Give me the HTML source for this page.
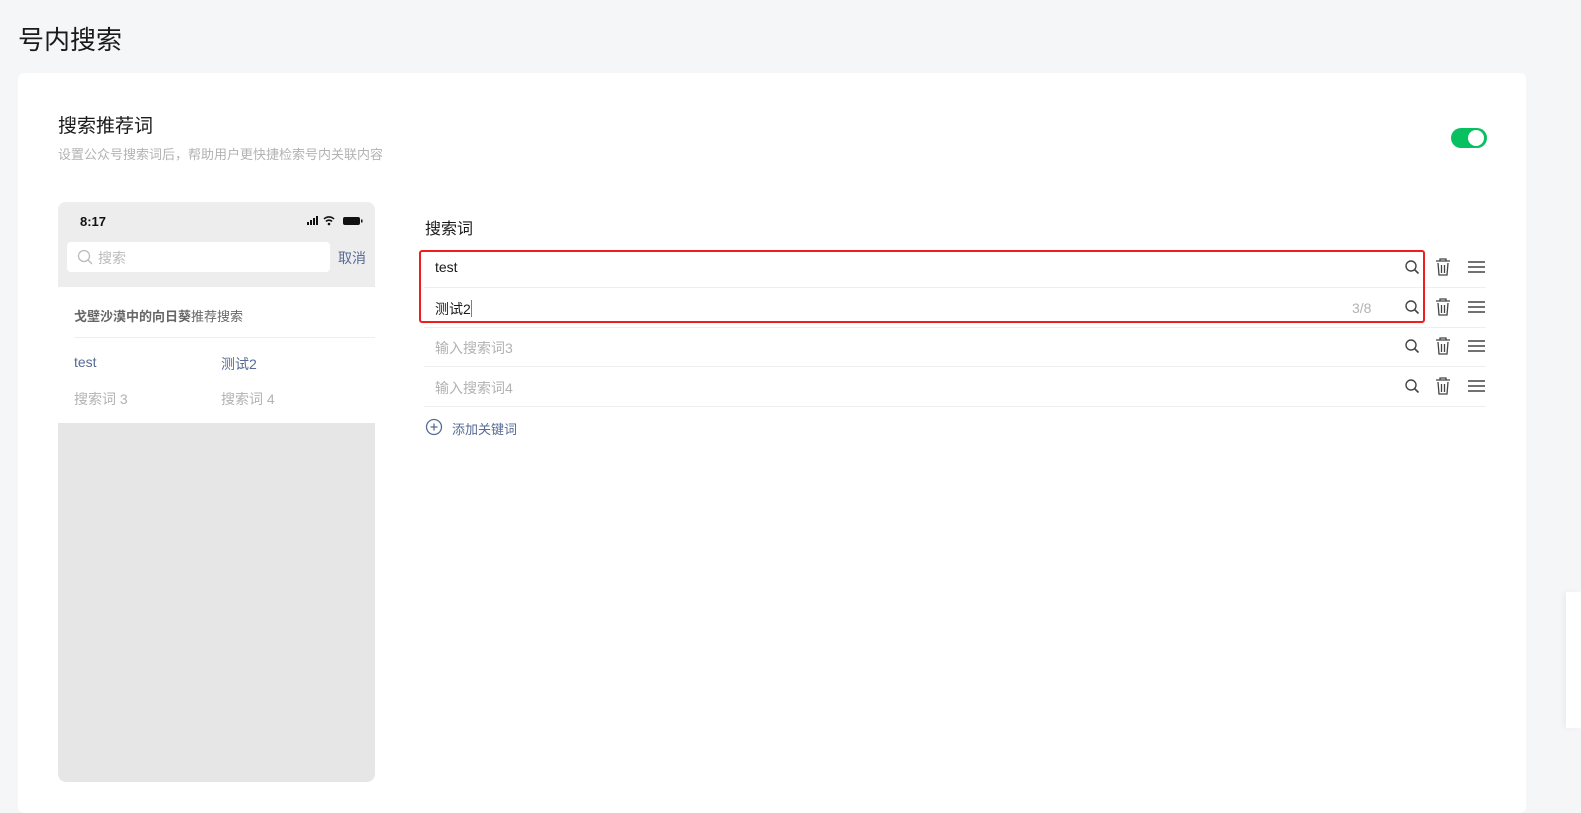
<!DOCTYPE html>
<html><head><meta charset="utf-8"><style>
*{margin:0;padding:0;box-sizing:border-box}
body{width:1581px;height:798px;background:#f5f6f8;font-family:"Liberation Sans","Noto Sans CJK SC",sans-serif;position:relative;overflow:hidden;color:#222}
.a{position:absolute}
</style></head><body>
<div class="a" style="left:18px;top:20px;font-size:26px;color:#1a1a1a">号内搜索</div>
<div class="a" style="left:18px;top:73px;width:1508px;height:740px;background:#fff;border-radius:6px"></div>
<div class="a" style="left:1566px;top:592px;width:15px;height:136px;background:#fff;box-shadow:-3px 0 6px rgba(0,0,0,.04)"></div>
<div class="a" style="left:58px;top:111px;font-size:19px;color:#1a1a1a">搜索推荐词</div>
<div class="a" style="left:58px;top:144px;font-size:13px;color:#b2b2b2">设置公众号搜索词后，帮助用户更快捷检索号内关联内容</div>
<div class="a" style="left:1451px;top:128px;width:36px;height:20px;border-radius:10px;background:#07c160"></div>
<div class="a" style="left:1468px;top:130px;width:16px;height:16px;border-radius:50%;background:#fff"></div>

<div class="a" style="left:58px;top:202px;width:317px;height:580px;background:#e6e6e6;border-radius:8px;overflow:hidden">
 <div class="a" style="left:0;top:0;width:317px;height:85px;background:#ededed"></div>
 <div class="a" style="left:22px;top:12px;font-size:13px;font-weight:bold;color:#111">8:17</div>
 <svg class="a" style="left:248px;top:13px" width="60" height="12"><rect x="1" y="7" width="2" height="3" fill="#111"/><rect x="4" y="5" width="2" height="5" fill="#111"/><rect x="7" y="3" width="2" height="7" fill="#111"/><rect x="10" y="1" width="2" height="9" fill="#111"/><path d="M18 4a7 7 0 0 1 10 0M20 6.5a4 4 0 0 1 6 0" stroke="#111" stroke-width="1.6" fill="none"/><circle cx="23" cy="9" r="1.3" fill="#111"/><rect x="37" y="2" width="17" height="8" rx="2" fill="#111"/><rect x="55" y="4.5" width="1.5" height="3" fill="#111"/></svg>
 <div class="a" style="left:9px;top:40px;width:263px;height:30px;background:#fff;border-radius:4px"></div>
 <svg class="a" style="left:19px;top:47px" width="16" height="16"><circle cx="7" cy="7" r="5.5" stroke="#bbb" stroke-width="1.3" fill="none"/><path d="M11 11l4 4" stroke="#bbb" stroke-width="1.3"/></svg>
 <div class="a" style="left:40px;top:46px;font-size:14px;color:#bbb">搜索</div>
 <div class="a" style="left:280px;top:46px;font-size:14px;color:#576b95">取消</div>
 <div class="a" style="left:0;top:85px;width:317px;height:136px;background:#fff"></div>
 <div class="a" style="left:16px;top:104px;font-size:13px;font-weight:bold;color:#666">戈壁沙漠中的向日葵<span style="font-weight:normal">推荐搜索</span></div>
 <div class="a" style="left:16px;top:135px;width:301px;height:1px;background:#eee"></div>
 <div class="a" style="left:16px;top:152px;font-size:14px;color:#576b95">test</div>
 <div class="a" style="left:163px;top:152px;font-size:14px;color:#576b95">测试2</div>
 <div class="a" style="left:16px;top:187px;font-size:14px;color:#b2b2b2">搜索词 3</div>
 <div class="a" style="left:163px;top:187px;font-size:14px;color:#b2b2b2">搜索词 4</div>
</div>

<div class="a" style="left:425px;top:215px;font-size:16px;color:#1a1a1a">搜索词</div>
<div class="a" style="left:424px;top:287px;width:1062px;height:1px;background:#eee"></div>
<div class="a" style="left:424px;top:327px;width:1062px;height:1px;background:#eee"></div>
<div class="a" style="left:424px;top:366px;width:1062px;height:1px;background:#eee"></div>
<div class="a" style="left:424px;top:406px;width:1062px;height:1px;background:#eee"></div>
<div class="a" style="left:419px;top:250px;width:1006px;height:73px;border:2px solid #f21c1c;border-radius:3px"></div>
<div class="a" style="left:435px;top:259px;font-size:14px;color:#1a1a1a">test</div>
<div class="a" style="left:435px;top:299px;font-size:14px;color:#1a1a1a">测试2<span style="display:inline-block;width:1px;height:17px;background:#07c160;vertical-align:-3px"></span></div>
<div class="a" style="left:1352px;top:300px;font-size:14px;color:#b2b2b2">3/8</div>
<div class="a" style="left:435px;top:338px;font-size:14px;color:#b2b2b2">输入搜索词3</div>
<div class="a" style="left:435px;top:378px;font-size:14px;color:#b2b2b2">输入搜索词4</div>

<svg class="a" style="left:1400px;top:255px" width="90" height="145">
 <defs><g id="r">
  <circle cx="11" cy="11" r="5" stroke="#444" stroke-width="1.4" fill="none"/><path d="M14.5 14.5l4 4" stroke="#444" stroke-width="1.6"/>
  <path d="M36 6h14M40 6V4h6v2M38 8l1 12h8l1-12M41.5 10v8M44.5 10v8" stroke="#444" stroke-width="1.3" fill="none"/>
  <path d="M68 7h17M68 12h17M68 17h17" stroke="#444" stroke-width="1.4"/>
 </g></defs>
 <use href="#r" y="0"/><use href="#r" y="40"/><use href="#r" y="79"/><use href="#r" y="119"/>
</svg>
<svg class="a" style="left:425px;top:418px" width="18" height="18"><circle cx="9" cy="9" r="7.5" stroke="#576b95" stroke-width="1.3" fill="none"/><path d="M9 5.5v7M5.5 9h7" stroke="#576b95" stroke-width="1.3"/></svg>
<div class="a" style="left:452px;top:419px;font-size:13px;color:#576b95">添加关键词</div>
</body></html>
